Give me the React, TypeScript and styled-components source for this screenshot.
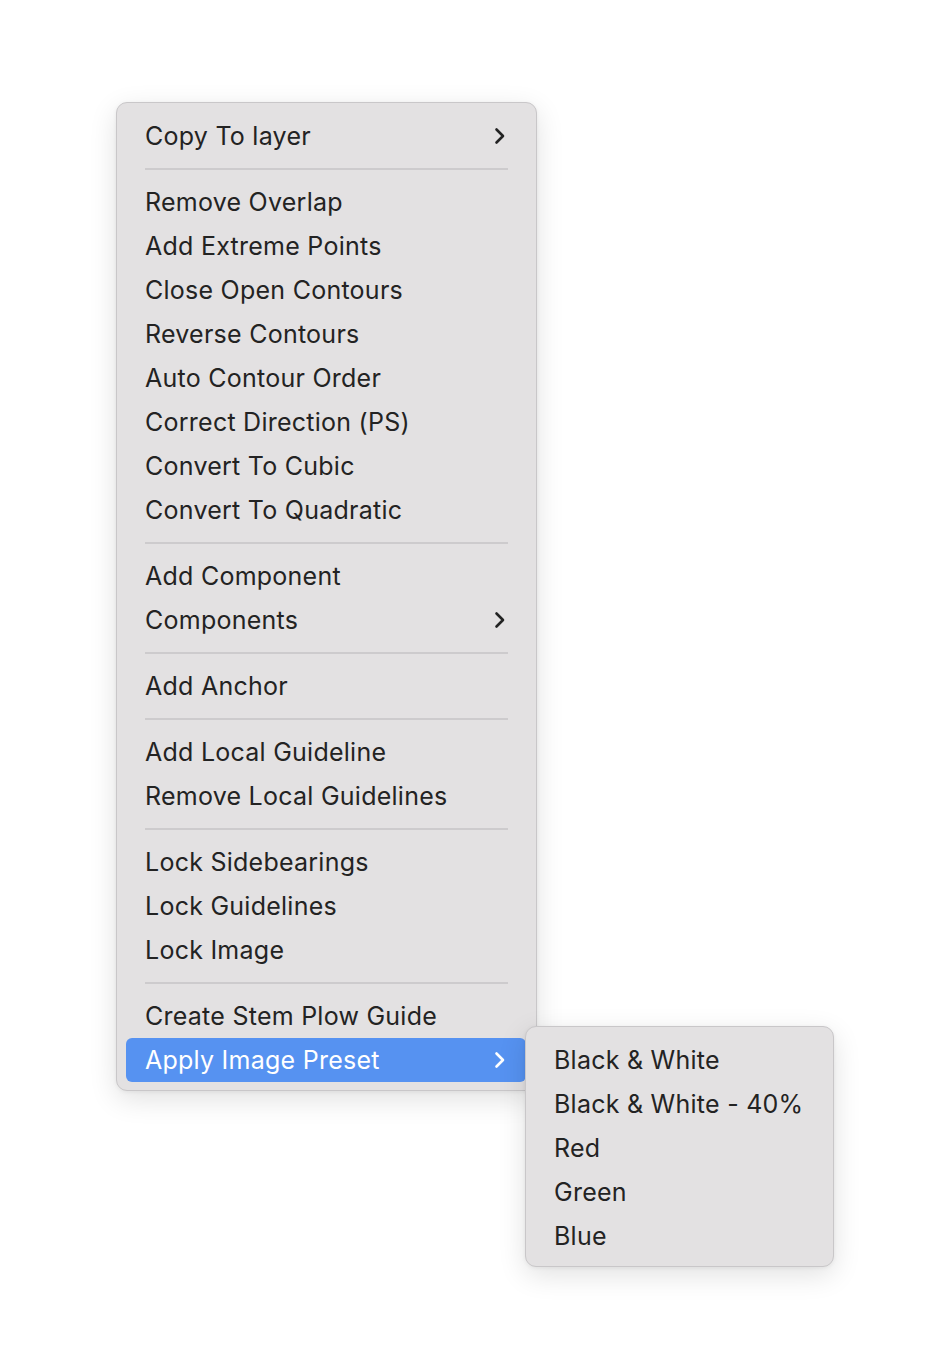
import styled, { createGlobalStyle } from 'styled-components'

const Global = createGlobalStyle`
  html, body { margin: 0; padding: 0; background: #ffffff; }
  body { font-family: Inter, 'Liberation Sans', sans-serif; }
`

const Page = styled.div`
  width: 942px;
  height: 1360px;
  padding: 102px 0 0 116px;
  box-sizing: border-box;
`

const Menu = styled.div`
  position: relative;
  width: 421px;
  box-sizing: border-box;
  padding: 11px 10px 8px 9px;
  background: #e3e1e2;
  border: 1px solid #c9c7c9;
  border-radius: 11px;
  box-shadow: 0 8px 28px rgba(0, 0, 0, 0.12), 0 1px 4px rgba(0, 0, 0, 0.06);
`

const Item = styled.div<{ $active?: boolean }>`
  position: relative;
  height: 44px;
  display: flex;
  align-items: center;
  justify-content: space-between;
  padding: 0 20px 0 19px;
  border-radius: 6px;
  font-size: 25px;
  letter-spacing: 0.25px;
  white-space: nowrap;
  color: ${({ $active }) => ($active ? '#ffffff' : '#232323')};
  background: ${({ $active }) => ($active ? '#5692f1' : 'transparent')};
`

const Separator = styled.div`
  height: 22px;
  display: flex;
  align-items: center;
  padding: 0 18px 0 19px;

  &::after {
    content: '';
    flex: 1;
    height: 2px;
    background: #cdcbcd;
  }
`

const Submenu = styled(Menu)`
  position: absolute;
  left: calc(100% - 1px);
  top: -12px;
  width: 309px;
  padding: 11px 10px 8px 9px;
  z-index: 2;
`

const Chevron = ({ color }: { color: string }) => (
  <svg width="12" height="18" viewBox="0 0 12 18" fill="none">
    <path d="M2.5 2.5 L9 9 L2.5 15.5" stroke={color} strokeWidth="2.6" strokeLinecap="round" strokeLinejoin="round" />
  </svg>
)

type Entry = { label: string; sub?: boolean } | 'sep'

const entries: Entry[] = [
  { label: 'Copy To layer', sub: true },
  'sep',
  { label: 'Remove Overlap' },
  { label: 'Add Extreme Points' },
  { label: 'Close Open Contours' },
  { label: 'Reverse Contours' },
  { label: 'Auto Contour Order' },
  { label: 'Correct Direction (PS)' },
  { label: 'Convert To Cubic' },
  { label: 'Convert To Quadratic' },
  'sep',
  { label: 'Add Component' },
  { label: 'Components', sub: true },
  'sep',
  { label: 'Add Anchor' },
  'sep',
  { label: 'Add Local Guideline' },
  { label: 'Remove Local Guidelines' },
  'sep',
  { label: 'Lock Sidebearings' },
  { label: 'Lock Guidelines' },
  { label: 'Lock Image' },
  'sep',
  { label: 'Create Stem Plow Guide' },
]

const presets = ['Black & White', 'Black & White - 40%', 'Red', 'Green', 'Blue']

export default function App() {
  return (
    <Page>
      <Global />
      <Menu>
        {entries.map((e, i) =>
          e === 'sep' ? (
            <Separator key={i} />
          ) : (
            <Item key={i}>
              <span>{e.label}</span>
              {e.sub && <Chevron color="#232323" />}
            </Item>
          )
        )}
        <Item $active>
          <span>Apply Image Preset</span>
          <Chevron color="#ffffff" />
          <Submenu>
            {presets.map((p) => (
              <Item key={p}>
                <span>{p}</span>
              </Item>
            ))}
          </Submenu>
        </Item>
      </Menu>
    </Page>
  )
}
